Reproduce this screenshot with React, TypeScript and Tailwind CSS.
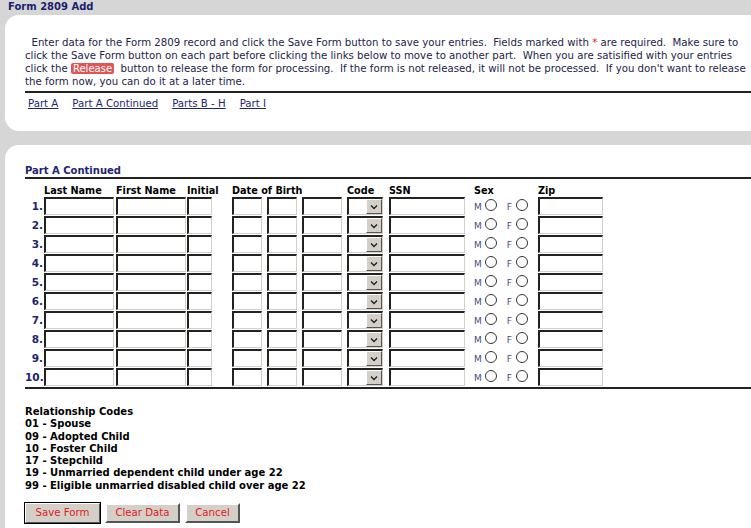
const cols = 'grid grid-cols-[19px_72px_71px_45px_35px_35px_45px_42px_85px_64px_65px]'

const TextBox = ({ w }: { w: string }) => (
  <div
    className={`${w} h-[18px] bg-white border-t-2 border-l-2 border-b border-r border-t-[#222] border-l-[#222] border-b-[#d4d0c8] border-r-[#d4d0c8]`}
  />
)

const CodeSelect = () => (
  <div className="w-[36px] h-[18px] bg-white flex justify-end border-t-2 border-l-2 border-b border-r border-t-[#222] border-l-[#222] border-b-[#d4d0c8] border-r-[#d4d0c8]">
    <div className="w-[16px] h-full bg-[#d4d0c8] border border-t-white border-l-white border-b-[#555] border-r-[#555] flex items-center justify-center">
      <svg width="8" height="6" viewBox="0 0 8 6">
        <path d="M1 1.5 L4 4.5 L7 1.5" fill="none" stroke="#222" strokeWidth="1.4" />
      </svg>
    </div>
  </div>
)

const Radio = () => (
  <span className="inline-block w-[12px] h-[12px] rounded-full border border-[#333] bg-white" />
)

const Row = ({ n }: { n: number }) => (
  <div className={`${cols} h-[19px]`}>
    <div className="font-bold text-[#1e2470] text-right pr-[1px] leading-[18px] text-[10.5px]">{n}.</div>
    <TextBox w="w-[70px]" />
    <TextBox w="w-[70px]" />
    <TextBox w="w-[25px]" />
    <TextBox w="w-[30px]" />
    <TextBox w="w-[30px]" />
    <TextBox w="w-[40px]" />
    <CodeSelect />
    <TextBox w="w-[76px]" />
    <div className="flex items-end h-[16px] text-[9px] leading-none text-[#4a4a80]">
      <span className="pb-[1px]">M</span>
      <span className="ml-[3px]">
        <Radio />
      </span>
      <span className="ml-[10px] pb-[1px]">F</span>
      <span className="ml-[4px]">
        <Radio />
      </span>
    </div>
    <TextBox w="w-[65px]" />
  </div>
)

const Btn = ({ label, w, first }: { label: string; w: string; first?: boolean }) => (
  <button
    className={`${w} h-[20px] bg-[#d4d0c8] text-[#e02020] text-[10.2px] ${
      first
        ? 'outline outline-1 outline-black border border-t-white border-l-white border-b-[#555] border-r-[#555]'
        : 'border-2 border-t-white border-l-white border-b-[#555] border-r-[#555]'
    }`}
  >
    {label}
  </button>
)

export default function App() {
  return (
    <div className="w-[751px] h-[528px] overflow-hidden bg-[#d6d6d6] font-['DejaVu_Sans',Verdana,sans-serif] text-[10.2px] text-[#222]">
      <div className="h-[15px] pl-2 leading-[14px] text-[10px] font-bold text-[#1b1f6e]">Form 2809 Add</div>

      <div className="ml-[5px] h-[116px] bg-white rounded-l-[14px] pt-[21px] pl-5 text-[#23234a]">
        <div className="leading-[13px] whitespace-pre">
          <div>
            {'  Enter data for the Form 2809 record and click the Save Form button to save your entries.  Fields marked with '}
            <span className="text-[#e02020]">*</span>
            {' are required.  Make sure to'}
          </div>
          <div>
            {'click the Save Form button on each part before clicking the links below to move to another part.  When you are satisified with your entries'}
          </div>
          <div className="flex items-center h-[13px]">
            {'click the '}
            <span className="inline-block bg-[#e05555] text-white text-[10px] leading-[11px] px-[2px] rounded-[2px]">Release</span>
            {'  button to release the form for processing.  If the form is not released, it will not be processed.  If you don\'t want to release'}
          </div>
          <div>{'the form now, you can do it at a later time.'}</div>
        </div>
        <div className="mt-[3px] h-[2px] bg-[#222]" />
        <div className="mt-[4px] flex gap-[14px] pl-[3px] leading-[13px] text-[#1e2470]">
          <a className="underline">Part A</a>
          <a className="underline">Part A Continued</a>
          <a className="underline">Parts B - H</a>
          <a className="underline">Part I</a>
        </div>
      </div>

      <div className="mt-[14px] ml-[5px] h-[400px] bg-white rounded-tl-[14px] pt-[20px] pl-5">
        <div className="font-bold text-[10px] text-[#1e2470] leading-[12px]">Part A Continued</div>
        <div className="h-[2px] bg-[#222]" />
        <div className={`${cols} mt-[5px] leading-[13px] text-[9.7px] font-bold text-black`}>
          <div />
          <div>Last Name</div>
          <div>First Name</div>
          <div>Initial</div>
          <div className="col-span-3">Date of Birth</div>
          <div>Code</div>
          <div>SSN</div>
          <div>Sex</div>
          <div>Zip</div>
        </div>
        {[1, 2, 3, 4, 5, 6, 7, 8, 9, 10].map((n) => (
          <Row key={n} n={n} />
        ))}
        <div className="h-[2px] bg-[#222]" />

        <div className="mt-[17px] font-bold text-[10px] text-black leading-[12.3px]">
          <div>Relationship Codes</div>
          <div>01 - Spouse</div>
          <div>09 - Adopted Child</div>
          <div>10 - Foster Child</div>
          <div>17 - Stepchild</div>
          <div>19 - Unmarried dependent child under age 22</div>
          <div>99 - Eligible unmarried disabled child over age 22</div>
        </div>

        <div className="mt-[11px] flex gap-[5px]">
          <Btn label="Save Form" w="w-[75px]" first />
          <Btn label="Clear Data" w="w-[75px]" />
          <Btn label="Cancel" w="w-[55px]" />
        </div>
      </div>
    </div>
  )
}
